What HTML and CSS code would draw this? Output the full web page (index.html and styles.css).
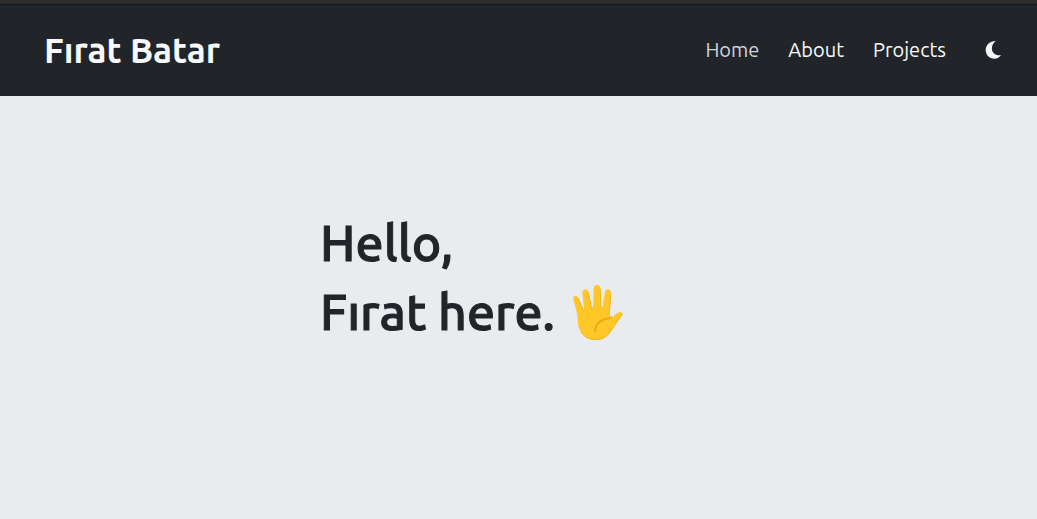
FILE: index.html
```html
<!DOCTYPE html>
<html lang="en">
<head>
<meta charset="utf-8">
<meta name="viewport" content="width=device-width, initial-scale=1">
<title>Fırat Batar</title>
<link rel="stylesheet" href="styles.css">
</head>
<body>
<header class="site-header">
  <a class="brand" href="#home">Fırat Batar</a>
  <nav class="nav" aria-label="Main">
    <a class="nav-link active" href="#home" aria-current="page">Home</a>
    <a class="nav-link" href="#about">About</a>
    <a class="nav-link" href="#projects">Projects</a>
    <button class="theme-toggle" type="button" aria-label="Toggle dark mode">
      <svg class="moon" viewBox="0 0 16 18" aria-hidden="true"><path d="M10.800 0C5 .2.7 3.800.7 9c0 5.200 3.800 8.700 8.600 8.700 3 0 5.200-1.200 6.600-3.600-5.600.6-9-2.400-9-6.700C6.900 4.200 8.200 1.700 10.800 0z"/></svg>
    </button>
  </nav>
</header>
<main class="hero">
  <h1 class="greeting">
    <span>Hello,</span>
    <span class="intro">Fırat here.
      <svg class="hand" viewBox="0 0 50 56" role="img" aria-label="Raised hand">
        <path class="skin" d="M4.500 33C4.200 26 1 18 .3 14c-.7-3.800 3.600-4.500 4.900-1.200l5 11.700c.3.800.9.500.8-.3L9.300 8c-.3-4.700 5.600-5.300 6.400-.7l2.800 15.200c.2.900 1.500.8 1.500-.2L20.700 3.500c.2-4.800 6.500-4.800 6.700 0l.6 18.500c0 1 1.400 1.100 1.500.1L32 7.500c.7-4.700 6.300-4.100 6 .5L36.500 31c0 1.600.8 2.400 2.200 1.600 2.900-1.700 5-5 8.100-5.500 2.300-.4 3.700 1.800 2.200 3.500-4 4.600-7.300 10.800-11.700 16.600-4 5.300-8.500 7.800-14.500 7.800-11.800 0-17.900-7.500-18.300-22z"/>
        <path class="shade" d="M5.200 13.500 10 24.800M15.500 8l2.800 14.500c.3 1.200 1.400 1.100 1.600.3M27.200 4l.6 18c.1 1.200 1.400 1.400 1.800.3M37.700 8l-1.500 23c0 1.200.6 1.900 1.600 1.600M49.200 29.500c-4.200 5-7.400 11-11.900 17.300-4 5.400-8.300 7.800-14.500 7.800-5.300 0-9.900-1.800-12.800-5.400"/>
        <path class="crease" d="M22 46.500c.5-8 6-11.800 12-12.800 2.200-.4 3.400-.6 4.500-1.300"/>
      </svg>
    </span>
  </h1>
</main>
</body>
</html>
```

FILE: styles.css
```css
* {
  box-sizing: border-box;
}

body {
  margin: 0;
  min-height: 100vh;
  background: #e8ecef;
  color: #212529;
  font-family: Ubuntu, "Noto Sans", sans-serif;
}

.site-header {
  display: flex;
  align-items: center;
  justify-content: space-between;
  padding: 20px 32px 20px 44px;
  border-top: 4px solid #2c2c2c;
  background: #212529;
  box-shadow: inset 0 1px #151617;
}

.brand {
  color: #f8f9fa;
  font-size: 35px;
  font-weight: 700;
  line-height: 52px;
  text-decoration: none;
}

.nav {
  display: flex;
  align-items: center;
  gap: 29px;
}

.nav-link {
  color: #f8f9fa;
  font-size: 20px;
  font-weight: 400;
  line-height: 28px;
  text-decoration: none;
}

.nav-link.active {
  color: #ced4da;
}

.theme-toggle {
  display: flex;
  padding: 4px;
  margin-left: 6px;
  border: 0;
  background: none;
  cursor: pointer;
}

.moon {
  width: 16px;
  height: 18px;
  fill: #f8f9fa;
}

.hero {
  display: flex;
  justify-content: center;
  padding: 112px 32px 112px 0;
}

.greeting {
  display: flex;
  flex-direction: column;
  margin: 0;
  padding-right: 62px;
  font-size: 50px;
  font-weight: 500;
  line-height: 69px;
  -webkit-text-stroke: 1px currentColor;
}

.intro {
  display: flex;
  align-items: center;
  gap: 18px;
}

.hand {
  width: 50px;
  height: 56px;
  margin-top: 2px;
}

.skin {
  fill: #ffc828;
}

.shade,
.crease {
  fill: none;
  stroke: #f5b41a;
  stroke-linecap: round;
  stroke-linejoin: round;
  stroke-width: 1;
}

.crease {
  stroke: #f0a913;
  stroke-width: 2;
}
```
